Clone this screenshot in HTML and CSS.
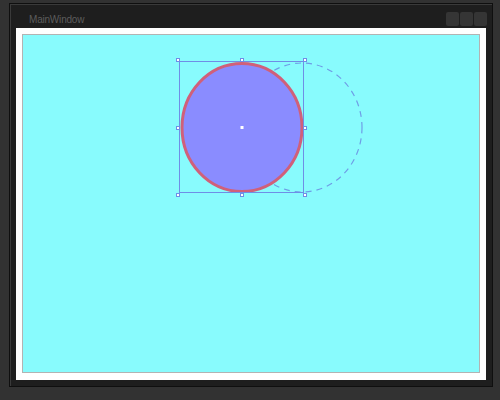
FILE: index.html
```html
<!DOCTYPE html>
<html lang="en">
<head>
    <meta charset="UTF-8">
    <title>MainWindow</title>
    <link rel="stylesheet" href="styles.css">
</head>
<body>
    <div class="ventana">
        <div class="ventana-titulo">
            <span class="titulo-texto">MainWindow</span>
            <div class="titulo-botones">
                <div class="boton"></div>
                <div class="boton"></div>
                <div class="boton"></div>
            </div>
        </div>
        <div class="ventana-cliente">
            <div class="lienzo">
                <svg class="lienzo-svg" viewBox="23 35 456 337" width="456" height="337">
                    <!-- elipse fantasma (arrastre) -->
                    <ellipse cx="302" cy="127.5" rx="60" ry="64.5" fill="none" stroke="#6f9de6" stroke-width="1.2" stroke-dasharray="6 5"/>
                    <!-- elipse seleccionada -->
                    <ellipse cx="242" cy="127.5" rx="60" ry="64" fill="#8a8cff" stroke="#d0607a" stroke-width="3"/>
                    <!-- caja de seleccion -->
                    <rect x="179.5" y="61.5" width="124" height="131" fill="none" stroke="#6f8ee6" stroke-width="1"/>
                    <g fill="#ffffff" stroke="#6f8ee6" stroke-width="1">
                        <rect x="176.5" y="58.5" width="3" height="3"/>
                        <rect x="240.5" y="58.5" width="3" height="3"/>
                        <rect x="303.5" y="58.5" width="3" height="3"/>
                        <rect x="176.5" y="126.5" width="3" height="3"/>
                        <rect x="303.5" y="126.5" width="3" height="3"/>
                        <rect x="176.5" y="193.5" width="3" height="3"/>
                        <rect x="240.5" y="193.5" width="3" height="3"/>
                        <rect x="303.5" y="193.5" width="3" height="3"/>
                    </g>
                    <rect x="240.5" y="126" width="3" height="3" fill="#ffffff"/>
                </svg>
            </div>
        </div>
    </div>
</body>
</html>
```

FILE: styles.css
```css
body {
    margin: 0;
    background: #323232;
    padding: 3px 7px 13px 9px;
    font-family: "Liberation Sans", Arial, sans-serif;
}

.ventana {
    width: 484px;
    height: 384px;
    box-sizing: border-box;
    background: #1e1e1e;
    border: 1px solid #0f0f0f;
    box-shadow: inset 1px 1px 0 #3a3a3a;
    padding: 0 6px 6px 6px;
    display: flex;
    flex-direction: column;
}

.ventana-titulo {
    height: 24px;
    display: flex;
    justify-content: space-between;
    align-items: flex-end;
    padding: 0 0 1px 13px;
}

.titulo-texto {
    color: #5c5c5c;
    font-size: 10px;
    letter-spacing: -0.2px;
    line-height: 12px;
    margin-bottom: 1px;
}

.titulo-botones {
    display: flex;
    gap: 1px;
    margin-right: -1px;
    margin-bottom: 1px;
}

.boton {
    width: 13px;
    height: 14px;
    background: #353535;
    border-radius: 2px;
}

.ventana-cliente {
    flex: 1;
    background: #ffffff;
    padding: 6px 6px 7px 6px;
    display: flex;
}

.lienzo {
    flex: 1;
    background: #88fbfd;
    border: 1px solid #b3b3b3;
    overflow: hidden;
}

.lienzo-svg {
    display: block;
}
```
